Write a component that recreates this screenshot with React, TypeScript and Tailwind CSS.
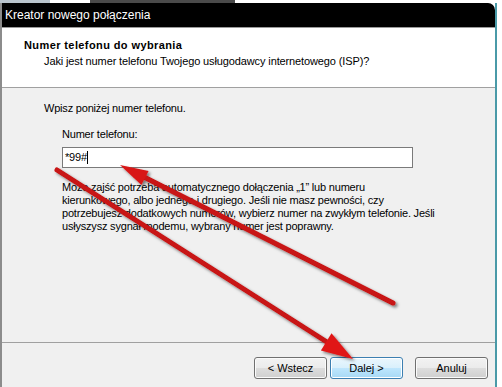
import React from "react";

const font = { fontFamily: '"Liberation Sans", Arial, sans-serif' };

function Btn({ label, focused }: { label: string; focused?: boolean }) {
  return (
    <div
      className={
        "w-[73px] h-[22px] rounded-[3px] border flex items-center justify-center text-[11px] text-black " +
        (focused
          ? "border-[#3c7fb1] bg-[linear-gradient(#eaf6fd_0%,#d9f0fc_50%,#bee6fd_51%,#a7d9f5_100%)] shadow-[inset_0_0_0_1px_#ffffff]"
          : "border-[#707070] bg-[linear-gradient(#f2f2f2_0%,#ebebeb_50%,#dddddd_51%,#cfcfcf_100%)] shadow-[inset_0_0_0_1px_#fbfbfb]")
      }
    >
      {label}
    </div>
  );
}

export default function App() {
  return (
    <div className="relative w-[502px] h-[387px] overflow-hidden bg-white" style={font}>
      <div className="h-[3px] flex">
        <div className="w-[50px] bg-[#b9c4cc]" />
        <div className="w-[40px] bg-white" />
        <div className="w-[145px] bg-[#4a4a4a]" />
        <div className="flex-1 bg-white" />
      </div>
      <div className="flex h-[384px]">
        <div className="w-[497px] flex flex-col border-l-2 border-l-[#8c8c8c] border-r-2 border-r-[#4a9aa8]">
          <div className="h-[24px] bg-black rounded-tr-[7px] flex items-center pl-[3px] text-white text-[12px]">
            Kreator nowego połączenia
          </div>
          <div className="h-px bg-[#9a9a9a]" />
          <div className="h-[59px] bg-white pl-[22px] pt-[10px]">
            <div className="text-[11px] font-bold text-black leading-[14px] tracking-[0.4px]">Numer telefonu do wybrania</div>
            <div className="text-[11px] text-black leading-[14px] mt-[2px] pl-[20px] tracking-[-0.12px]">
              Jaki jest numer telefonu Twojego usługodawcy internetowego (ISP)?
            </div>
          </div>
          <div className="h-px bg-[#a0a0a0]" />
          <div className="flex-1 bg-[#f0f0f0] pt-[14px] pl-[42px] text-[11px] text-black tracking-[-0.2px]">
            <div className="leading-[13px]">Wpisz poniżej numer telefonu.</div>
            <div className="pl-[18px] mt-[13px] leading-[13px]">Numer telefonu:</div>
            <div className="ml-[18px] mt-[6px] w-[351px] h-[21px] bg-white border border-[#7a7a7a] flex items-center pl-[2px]">
              <span>*99#</span>
              <span className="w-px h-[13px] bg-black" />
            </div>
            <div className="ml-[18px] mt-[13px] leading-[13px]">
              <div>Może zajść potrzeba automatycznego dołączenia „1” lub numeru</div>
              <div>kierunkowego, albo jednego i drugiego. Jeśli nie masz pewności, czy</div>
              <div>potrzebujesz dodatkowych numerów, wybierz numer na zwykłym telefonie. Jeśli</div>
              <div>usłyszysz sygnał modemu, wybrany numer jest poprawny.</div>
            </div>
          </div>
          <div className="h-px bg-[#a0a0a0]" />
          <div className="h-[44px] bg-[#f0f0f0] flex items-start pt-[14px] pl-[252px]">
            <Btn label="< Wstecz" />
            <div className="w-[3px]" />
            <Btn label="Dalej >" focused />
            <div className="w-[12px]" />
            <Btn label="Anuluj" />
          </div>
        </div>
        <div className="flex-1 bg-white" />
      </div>

      <svg className="absolute inset-0 pointer-events-none" width="502" height="387" viewBox="0 0 502 387">
        <defs>
          <filter id="sh" x="-20%" y="-20%" width="140%" height="140%">
            <feDropShadow dx="2" dy="2" stdDeviation="1.8" floodColor="#000" floodOpacity="0.5" />
          </filter>
        </defs>
        <g filter="url(#sh)">
          <line x1="393" y1="303" x2="140" y2="175" stroke="#c81212" strokeWidth="5" strokeLinecap="round" />
          <polygon points="120,165 141.4,185.1 148.6,170.9" fill="#d81818" />
          <line x1="57" y1="170" x2="330" y2="344" stroke="#c81212" strokeWidth="5" strokeLinecap="round" />
          <polygon points="353,359 320.9,350.5 331.5,333.3" fill="#e01818" />
        </g>
      </svg>
    </div>
  );
}
